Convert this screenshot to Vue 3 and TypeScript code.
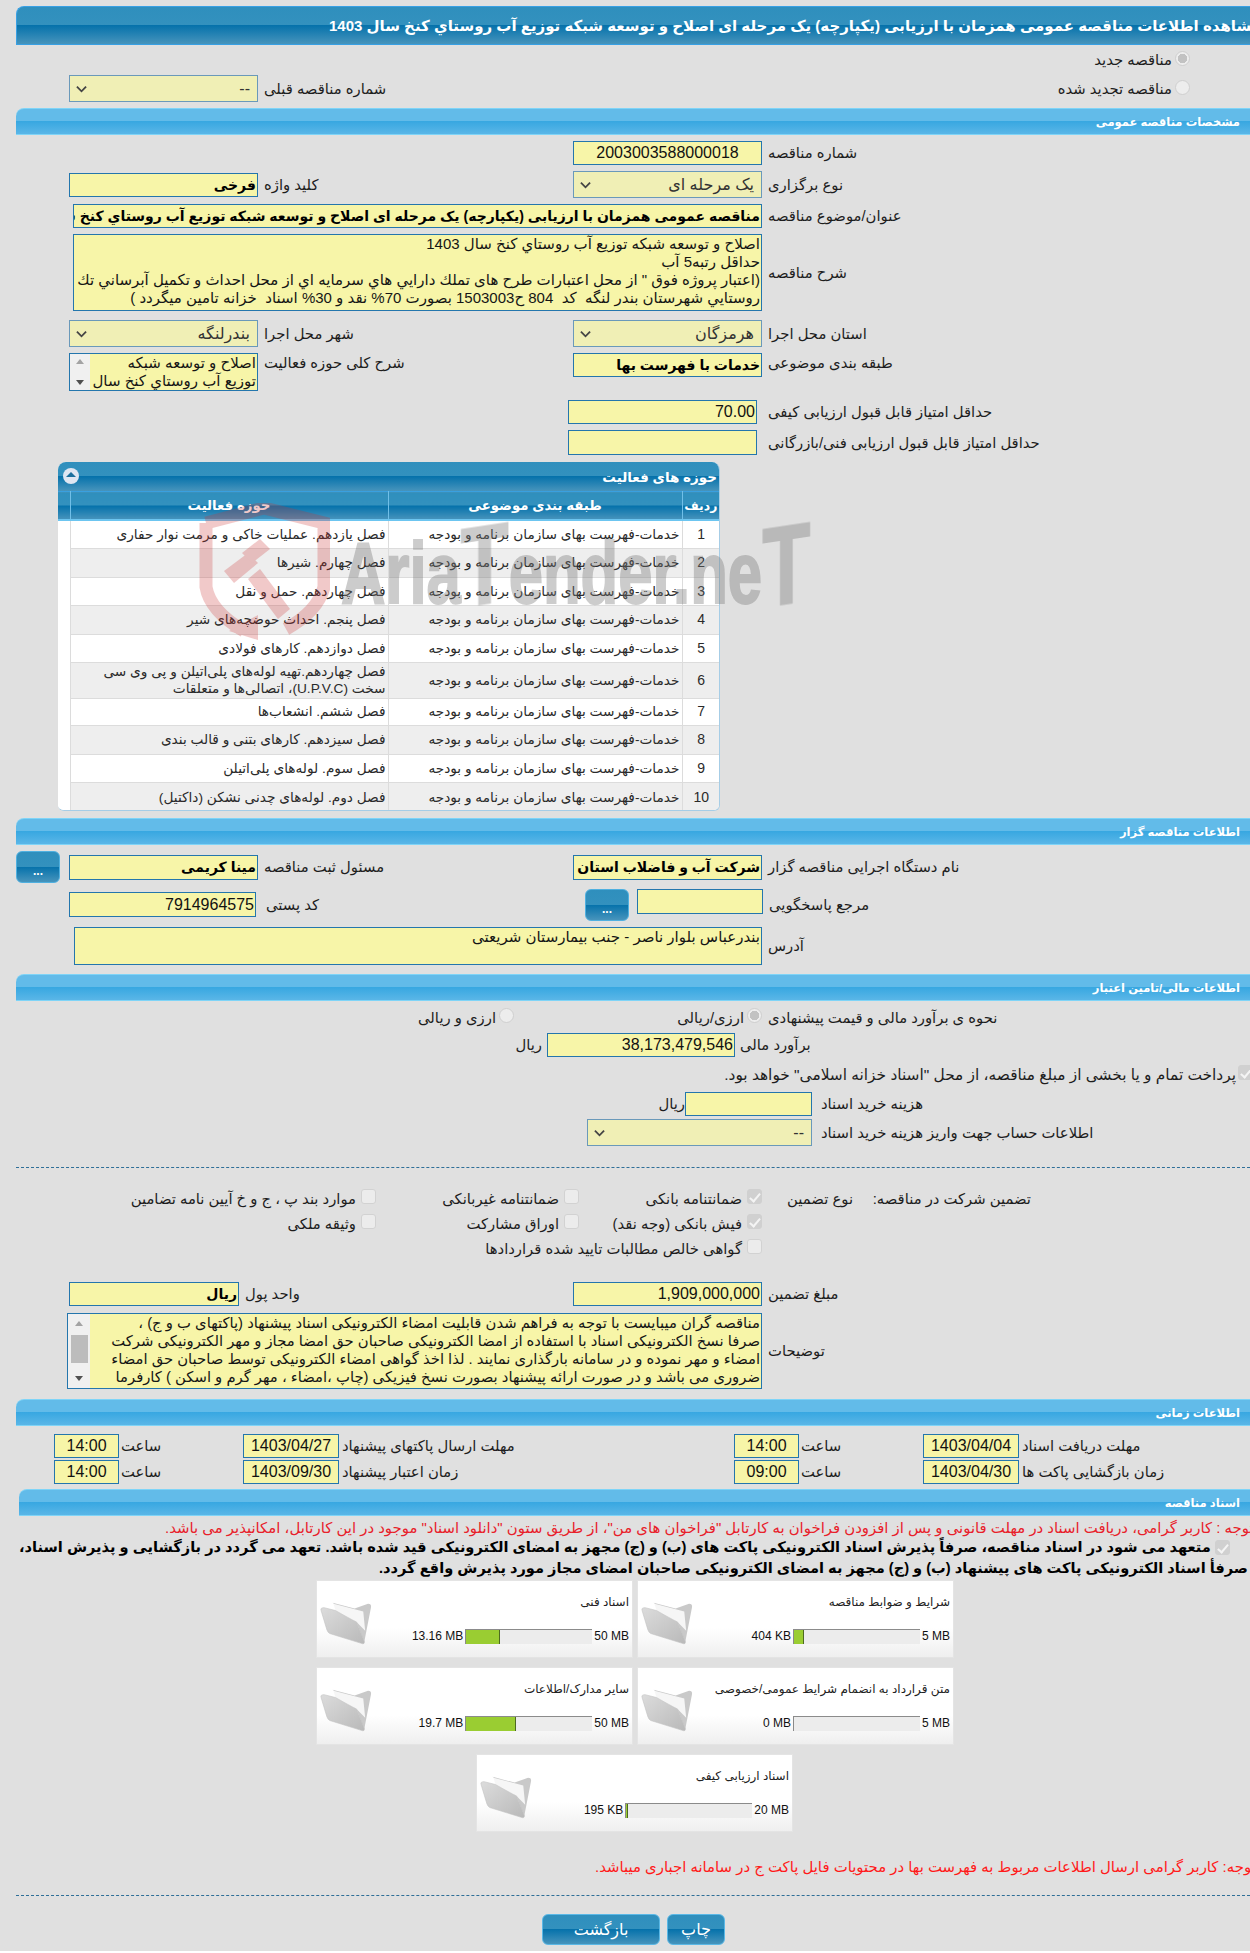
<script setup lang="ts">
interface Row { id: number; activity: string; h: number }
const rows: Row[] = [
  { id: 1, activity: 'فصل یازدهم. عملیات خاکی و مرمت نوار حفاری', h: 28 },
  { id: 2, activity: 'فصل چهارم. شیرها', h: 29 },
  { id: 3, activity: 'فصل چهاردهم. حمل و نقل', h: 28 },
  { id: 4, activity: 'فصل پنجم. احداث حوضچه‌های شیر', h: 29 },
  { id: 5, activity: 'فصل دوازدهم. کارهای فولادی', h: 28 },
  { id: 6, activity: 'فصل چهاردهم.تهیه لوله‌های پلی‌اتیلن و پی وی سی سخت (U.P.V.C)، اتصالی‌ها و متعلقات', h: 36 },
  { id: 7, activity: 'فصل ششم. انشعاب‌ها', h: 27 },
  { id: 8, activity: 'فصل سیزدهم. کارهای بتنی و قالب بندی', h: 29 },
  { id: 9, activity: 'فصل سوم. لوله‌های پلی‌اتیلن', h: 28 },
  { id: 10, activity: 'فصل دوم. لوله‌های چدنی نشکن (داکتیل)', h: 30 },
]
const classification = 'خدمات-فهرست بهای سازمان برنامه و بودجه'
interface Doc { title: string; used: string; max: string; fill: number }
const docRow1: Doc[] = [
  { title: 'اسناد فنی', used: '13.16 MB', max: '50 MB', fill: 35 },
  { title: 'شرایط و ضوابط مناقصه', used: '404 KB', max: '5 MB', fill: 11 },
]
const docRow2: Doc[] = [
  { title: 'سایر مدارک/اطلاعات', used: '19.7 MB', max: '50 MB', fill: 51 },
  { title: 'متن قرارداد به انضمام شرایط عمومی/خصوصی', used: '0 MB', max: '5 MB', fill: 0 },
]
const docRow3: Doc[] = [
  { title: 'اسناد ارزیابی کیفی', used: '195 KB', max: '20 MB', fill: 3 },
]
const docGroups = [
  { cls: 'docs', items: docRow1 },
  { cls: 'docs', items: docRow2 },
  { cls: 'docs docs-c', items: docRow3 },
]
const descLines = [
  'اصلاح و توسعه شبکه توزیع آب روستاي کنخ سال 1403',
  'حداقل رتبه5 آب',
  '(اعتبار پروژه فوق " از محل اعتبارات طرح های تملك دارايي هاي سرمايه اي از محل احداث و تکمیل آبرساني تك',
  'روستايي شهرستان بندر لنگه  کد  804 ح1503003 بصورت 70% نقد و 30% اسناد  خزانه تامین میگردد )',
]
const scopeLines = ['اصلاح و توسعه شبکه', 'توزیع آب روستاي کنخ سال']
const noteLines = [
  'مناقصه گران میبایست با توجه به فراهم شدن قابلیت امضاء الکترونیکی اسناد پیشنهاد (پاکتهای ب و ج) ،',
  'صرفا نسخ الکترونیکی اسناد با استفاده از امضا الکترونیکی صاحبان حق امضا مجاز و مهر الکترونیکی شرکت',
  'امضاء و مهر نموده و در سامانه بارگذاری نمایند . لذا اخذ گواهی امضاء الکترونیکی توسط صاحبان حق امضاء',
  'ضروری می باشد و در صورت ارائه پیشنهاد بصورت نسخ فیزیکی (چاپ ،امضاء ، مهر گرم و اسکن ) کارفرما',
]
</script>

<template>
  <div class="page">
    <div class="bar bar-dark"><span class="main-title">مشاهده اطلاعات مناقصه عمومی همزمان با ارزیابی (یکپارچه) یک مرحله ای اصلاح و توسعه شبکه توزیع آب روستاي کنخ سال 1403</span></div>

    <div class="radio-top"><span class="lab">مناقصه جدید</span><i class="radio on"></i></div>
    <div class="row m9 h27">
      <div class="left">
        <div class="select w189"><svg class="chev" viewBox="0 0 12 8"><path d="M1 1.5 6 6.5 11 1.5" /></svg><span>--</span></div>
        <span class="lab">شماره مناقصه قبلی</span>
      </div>
      <div class="radio-right"><i class="radio"></i><span class="lab">مناقصه تجدید شده</span></div>
    </div>

    <div class="bar bar-light m6"><span>مشخصات مناقصه عمومی</span></div>

    <div class="row m6 h24">
      <div class="left"></div>
      <div class="input w189 center num">2003003588000018</div>
      <span class="lab">شماره مناقصه</span>
    </div>
    <div class="row m6 h27">
      <div class="left">
        <div class="input w189 bold">فرخی</div>
        <span class="lab">کلید واژه</span>
      </div>
      <div class="select w189"><svg class="chev" viewBox="0 0 12 8"><path d="M1 1.5 6 6.5 11 1.5" /></svg><span>یک مرحله ای</span></div>
      <span class="lab">نوع برگزاری</span>
    </div>
    <div class="row row-wide m6 h24">
      <div class="input w689 bold">مناقصه عمومی همزمان با ارزیابی (یکپارچه) یک مرحله ای اصلاح و توسعه شبکه توزیع آب روستاي کنخ سال 1403</div>
      <span class="lab">عنوان/موضوع مناقصه</span>
    </div>
    <div class="row row-wide m6 h77">
      <div class="area w689">
        <div class="area-text"><div v-for="l in descLines" :key="l" class="pre">{{ l }}</div></div>
      </div>
      <span class="lab">شرح مناقصه</span>
    </div>
    <div class="row m9 h27">
      <div class="left">
        <div class="select w189"><svg class="chev" viewBox="0 0 12 8"><path d="M1 1.5 6 6.5 11 1.5" /></svg><span>بندرلنگه</span></div>
        <span class="lab">شهر محل اجرا</span>
      </div>
      <div class="select w189"><svg class="chev" viewBox="0 0 12 8"><path d="M1 1.5 6 6.5 11 1.5" /></svg><span>هرمزگان</span></div>
      <span class="lab">استان محل اجرا</span>
    </div>
    <div class="row row-ta m6 h38 top">
      <div class="left top">
        <div class="area w189 h38">
          <div class="scroll scroll-sm"><i class="up"></i><i class="down"></i></div>
          <div class="area-text"><div v-for="l in scopeLines" :key="l" class="pre">{{ l }}</div></div>
        </div>
        <span class="lab">شرح کلی حوزه فعالیت</span>
      </div>
      <div class="input w189 h24 bold">خدمات با فهرست بها</div>
      <span class="lab">طبقه بندی موضوعی</span>
    </div>
    <div class="row row-score m9 h24">
      <div class="input w189 num right">70.00</div>
      <span class="lab">حداقل امتیاز قابل قبول ارزیابی کیفی</span>
    </div>
    <div class="row row-score m6 h25">
      <div class="input w189 h25"></div>
      <span class="lab">حداقل امتیاز قابل قبول ارزیابی فنی/بازرگانی</span>
    </div>

    <div class="panel">
      <div class="panel-head">
        <i class="toggle"></i>
        <span>حوزه های فعالیت</span>
      </div>
      <table class="grid">
        <colgroup><col class="c1" /><col class="c2" /><col class="c3" /><col class="c4" /></colgroup>
        <thead>
          <tr>
            <th>ردیف</th>
            <th>طبقه بندی موضوعی</th>
            <th>حوزه فعالیت</th>
            <th></th>
          </tr>
        </thead>
        <tbody>
          <tr v-for="r in rows" :key="r.id" :class="{ alt: r.id % 2 === 0 }" :style="{ height: r.h + 'px' }">
            <td class="num-cell">{{ r.id }}</td>
            <td>{{ classification }}</td>
            <td>{{ r.activity }}</td>
            <td class="blank"></td>
          </tr>
        </tbody>
      </table>
    </div>

    <div class="bar bar-light m7"><span>اطلاعات مناقصه گزار</span></div>

    <div class="row row-btn m6 h32">
      <div class="left left-btn">
        <button class="btn-dots">...</button>
        <div class="input w189 h25 bold">مینا کریمی</div>
        <span class="lab">مسئول ثبت مناقصه</span>
      </div>
      <div class="input w189 h25 bold">شرکت آب و فاضلاب استان هرمزگان</div>
      <span class="lab">نام دستگاه اجرایی مناقصه گزار</span>
    </div>
    <div class="row row-resp m6 h32">
      <div class="left">
        <div class="input w187 h25 num right">7914964575</div>
        <span class="lab lab-zip">کد پستی</span>
      </div>
      <div class="respond">
        <button class="btn-dots">...</button>
        <div class="input w126 h25"></div>
      </div>
      <span class="lab lab-resp">مرجع پاسخگویی</span>
    </div>
    <div class="row row-addr m6 h38">
      <div class="area w688 h38">
        <div class="area-text">بندرعباس بلوار ناصر - جنب بیمارستان شریعتی</div>
      </div>
      <span class="lab">آدرس</span>
    </div>

    <div class="bar bar-light m9"><span>اطلاعات مالی/تامین اعتبار</span></div>

    <div class="fin-radios">
      <span class="opt"><i class="radio"></i><span class="lab">ارزی و ریالی</span></span>
      <span class="opt"><i class="radio on"></i><span class="lab">ارزی/ریالی</span></span>
      <span class="lab fin-lab">نحوه ی برآورد مالی و قیمت پیشنهادی</span>
    </div>
    <div class="row row-budget m5 h24">
      <span class="lab budget-unit">ریال</span>
      <div class="input w188 num right">38,173,479,546</div>
      <span class="lab">برآورد مالی</span>
    </div>
    <div class="treasury">
      <span class="lab">پرداخت تمام و یا بخشی از مبلغ مناقصه، از محل "اسناد خزانه اسلامی" خواهد بود.</span>
      <i class="check on"></i>
    </div>
    <div class="row row-cost m7 h24">
      <span class="lab">ریال</span>
      <div class="input w127"></div>
      <span class="lab">هزینه خرید اسناد</span>
    </div>
    <div class="row row-acc m3 h27">
      <div class="select w225"><svg class="chev" viewBox="0 0 12 8"><path d="M1 1.5 6 6.5 11 1.5" /></svg><span>--</span></div>
      <span class="lab">اطلاعات حساب جهت واریز هزینه خرید اسناد</span>
    </div>

    <div class="dashed dashed-1"></div>

    <div class="guar">
      <div class="g"><i class="check"></i><span class="lab">موارد بند پ ، ج و خ آیین نامه تضامین</span></div>
      <div class="g"><i class="check"></i><span class="lab">ضمانتنامه غیربانکی</span></div>
      <div class="g"><i class="check on"></i><span class="lab">ضمانتنامه بانکی</span></div>
      <div class="g"><span class="lab">نوع تضمین</span></div>
      <div class="g"><span class="lab">تضمین شرکت در مناقصه:</span></div>
      <div class="g"><i class="check"></i><span class="lab">وثیقه ملکی</span></div>
      <div class="g"><i class="check"></i><span class="lab">اوراق مشارکت</span></div>
      <div class="g"><i class="check on"></i><span class="lab">فیش بانکی (وجه نقد)</span></div>
      <div class="g"></div>
      <div class="g"></div>
      <div class="g"></div>
      <div class="g"></div>
      <div class="g"><i class="check"></i><span class="lab">گواهی خالص مطالبات تایید شده قراردادها</span></div>
    </div>

    <div class="row m21 h24">
      <div class="left">
        <div class="input w170 bold">ریال</div>
        <span class="lab">واحد پول</span>
      </div>
      <div class="input w189 num right">1,909,000,000</div>
      <span class="lab">مبلغ تضمین</span>
    </div>
    <div class="row row-note m7 h76">
      <div class="area area-note w695">
        <div class="scroll"><i class="up"></i><b class="thumb"></b><i class="down"></i></div>
        <div class="area-text"><div v-for="l in noteLines" :key="l" class="pre">{{ l }}</div></div>
      </div>
      <span class="lab">توضیحات</span>
    </div>

    <div class="bar bar-light m10"><span>اطلاعات زمانی</span></div>

    <div class="times m8">
      <div class="time-half">
        <div class="input t-time num center">14:00</div><span class="lab t-sa">ساعت</span>
        <div class="input t-date num center">1403/04/27</div><span class="lab">مهلت ارسال پاکتهای پیشنهاد</span>
      </div>
      <div class="time-half">
        <div class="input t-time num center">14:00</div><span class="lab t-sa">ساعت</span>
        <div class="input t-date num center">1403/04/04</div><span class="lab">مهلت دریافت اسناد</span>
      </div>
    </div>
    <div class="times m2">
      <div class="time-half">
        <div class="input t-time num center">14:00</div><span class="lab t-sa">ساعت</span>
        <div class="input t-date num center">1403/09/30</div><span class="lab">زمان اعتبار پیشنهاد</span>
      </div>
      <div class="time-half">
        <div class="input t-time num center">09:00</div><span class="lab t-sa">ساعت</span>
        <div class="input t-date num center">1403/04/30</div><span class="lab">زمان بازگشایی پاکت ها</span>
      </div>
    </div>

    <div class="bar bar-light bar-docs m5"><span>اسناد مناقصه</span></div>

    <div class="notice n1">توجه : کاربر گرامی، دریافت اسناد در مهلت قانونی و پس از افزودن فراخوان به کارتابل "فراخوان های من"، از طریق ستون "دانلود اسناد" موجود در این کارتابل، امکانپذیر می باشد.</div>
    <div class="pledge p1">
      <span>متعهد می شود در اسناد مناقصه، صرفاً پذیرش اسناد الکترونیکی پاکت های (ب) و (ج) مجهز به امضای الکترونیکی قید شده باشد. تعهد می گردد در بازگشایی و پذیرش اسناد،</span>
      <i class="check on"></i>
    </div>
    <div class="pledge p2"><span>صرفأ اسناد الکترونیکی پاکت های پیشنهاد (ب) و (ج) مجهز به امضای الکترونیکی صاحبان امضای مجاز مورد پذیرش واقع گردد.</span></div>

    <div v-for="(g, gi) in docGroups" :key="gi" :class="g.cls">
      <div v-for="d in g.items" :key="d.title" class="card">
        <svg class="folder" viewBox="0 0 54 48">
          <defs>
            <linearGradient id="fg" x1="0" y1="0" x2="1" y2="1">
              <stop offset="0" stop-color="#dcdcdc" />
              <stop offset="1" stop-color="#b9b9b9" />
            </linearGradient>
          </defs>
          <path d="M13 4 36 10 50 5Q54 5 53 9L46 45 38 24Z" fill="#c9c9c9" />
          <path d="M14 5 45 13 47 33 38 24 16 12Z" fill="#f6f6f6" />
          <path d="M1 12Q0 9 4 9L16 12Q30 20 38 24L46 44Q47 48 42 46L10 36Q8 35 7 32Z" fill="url(#fg)" stroke="#c2c2c2" stroke-width=".6" />
        </svg>
        <div class="card-body">
          <div class="card-title">{{ d.title }}</div>
          <div class="meter">
            <span class="mtext">{{ d.used }}</span>
            <div class="track"><div class="fill" :class="{ empty: d.fill === 0 }" :style="{ width: d.fill + 'px' }"></div></div>
            <span class="mtext">{{ d.max }}</span>
          </div>
        </div>
      </div>
    </div>

    <div class="notice n2">توجه: کاربر گرامی ارسال اطلاعات مربوط به فهرست بها در محتویات فایل پاکت ج در سامانه اجباری میباشد.</div>
    <div class="dashed dashed-2"></div>
    <div class="actions">
      <button class="action act-back">بازگشت</button>
      <button class="action act-print">چاپ</button>
    </div>

    <div class="watermark" aria-hidden="true">
      <svg class="shield" viewBox="0 0 132 145">
        <g fill="none" stroke="#c33" stroke-width="13">
          <path d="M8 20 66 5 126 20V84Q120 108 88 126" />
          <path d="M8 20V84Q12 108 46 128" />
        </g>
        <g fill="#c33">
          <path d="M31 128 60 137V112Z" />
          <path d="M26 68 50 50 60 60 36 80Z" />
          <path d="M44 50 62 36 72 46 54 60Z" />
          <path d="M50 76 62 66 92 106 80 116Z" />
        </g>
      </svg>
      <div class="wm-text"><span>Aria</span><span class="wm-t">T</span><span>ender.ne</span><span class="wm-t">T</span></div>
    </div>
  </div>
</template>

<style scoped>
.page {
  position: relative;
  box-sizing: border-box;
  height: 1951px;
  padding-top: 6px;
  background: #e0e0e0;
  overflow: hidden;
  font-family: "Liberation Sans", "DejaVu Sans", sans-serif;
  font-size: 12px;
  color: #1d1d1d;
}
.bar {
  box-sizing: border-box;
  margin-left: 16px;
  display: flex;
  align-items: center;
  color: #fff;
  font-weight: 700;
  white-space: nowrap;
}
.bar-dark {
  height: 39px;
  border-top-left-radius: 8px;
  border-left: 1px solid #38a0e4;
  border-top: 1px solid #38a0e4;
  border-bottom: 1px solid #38a0e4;
  background: linear-gradient(#2f8fbd 0, #3391be 49%, #0672ab 50%, #4794bc 100%);
}
.main-title {
  margin-left: 312px;
  direction: rtl;
  font-size: 15px;
  flex: none;
}
.bar-light {
  height: 27px;
  padding-right: 10px;
  direction: rtl;
  border-top-left-radius: 8px;
  border-top: 1px solid #7fd4f7;
  border-bottom: 1px solid #7fd4f7;
  background: linear-gradient(#62bbe9 0, #62bbe9 47%, #37a7e1 48%, #5ab6e7 100%);
  font-size: 11.5px;
}
.bar-docs { margin-left: 19px; }

.m2 { margin-top: 2px; }
.m3 { margin-top: 3px; }
.m5 { margin-top: 5px; }
.m6 { margin-top: 6px; }
.m7 { margin-top: 7px; }
.m8 { margin-top: 8px; }
.m9 { margin-top: 9px; }
.m10 { margin-top: 10px; }
.m21 { margin-top: 21px; }
.h24 { height: 24px; }
.h25 { height: 25px; }
.h27 { height: 27px; }
.h32 { height: 32px; }
.h38 { height: 38px; }
.h76 { height: 76px; }
.h77 { height: 77px; }

.row {
  display: flex;
  align-items: center;
  gap: 6px;
  padding-left: 69px;
}
.row.top, .left.top { align-items: flex-start; }
.left {
  width: 504px;
  flex: none;
  display: flex;
  align-items: center;
  gap: 6px;
  height: 100%;
}
.row > .left { margin-right: -6px; }
.row-wide { padding-left: 73px; }
.row-ta .lab { margin-top: 2px; }
.row-score { padding-left: 568px; gap: 11px; }
.row-btn { padding-left: 16px; }
.left-btn { width: 557px; }
.left-btn .btn-dots { margin-right: 3px; }
.row-resp { align-items: flex-start; }
.row-resp .left { align-items: flex-start; }
.row-resp .left .input { margin-top: 3px; }
.lab-zip { margin-left: 4px; margin-top: 8px; }
.lab-resp { margin-top: 8px; }
.row-addr { padding-left: 74px; }
.row-note { padding-left: 67px; }
.row-budget { padding-left: 518px; gap: 5px; }
.budget-unit { width: 24px; flex: none; }
.row-cost { padding-left: 662px; gap: 9px; }
.row-cost > .lab:first-child { width: 23px; flex: none; margin-right: -9px; }
.row-acc { padding-left: 587px; gap: 9px; }

.lab {
  direction: rtl;
  white-space: nowrap;
  font-size: 14.8px;
  line-height: 16px;
}

.input, .select {
  box-sizing: border-box;
  flex: none;
  height: 24px;
  direction: rtl;
  white-space: nowrap;
  overflow: hidden;
  display: flex;
  align-items: center;
}
.input {
  border: 1px solid #2476ad;
  background: #f7f5a8;
  color: #111;
  padding: 0 1px;
  font-size: 13px;
}
.select {
  position: relative;
  height: 27px;
  border: 1px solid #6a99ba;
  background: #f0efb5;
  color: #333;
  padding-right: 7px;
  font-size: 16px;
}
.chev {
  position: absolute;
  left: 6px;
  top: 9px;
  width: 11px;
  height: 8px;
  fill: none;
  stroke: #444;
  stroke-width: 2;
}
.input.h24 { height: 24px; }
.input.h25 { height: 25px; }
.w126 { width: 126px; }
.w127 { width: 127px; }
.w170 { width: 170px; }
.w187 { width: 187px; }
.w188 { width: 188px; }
.w189 { width: 189px; }
.w225 { width: 225px; }
.w688 { width: 688px; }
.w689 { width: 689px; }
.w695 { width: 695px; }
.bold { font-weight: 700; font-size: 14px; color: #000; }
.num { font-size: 16px; }
.center { justify-content: center; }
.right { justify-content: flex-start; }

.area {
  box-sizing: border-box;
  flex: none;
  height: 100%;
  border: 1px solid #2476ad;
  background: #f7f5a8;
  display: flex;
  overflow: hidden;
  font-size: 15px;
  line-height: 18px;
}
.area.h38 { height: 38px; }
.area-note { font-size: 14.8px; }
.area-text {
  flex: 1;
  min-width: 0;
  direction: rtl;
  padding: 0 1px;
  color: #151515;
  overflow: hidden;
}
.pre { white-space: pre; }
.scroll {
  flex: none;
  width: 22px;
  background: #f0f0f0;
  display: flex;
  flex-direction: column;
  align-items: center;
  justify-content: space-between;
  padding: 7px 0;
  box-sizing: border-box;
}
.scroll-sm { width: 20px; padding: 5px 0; }
.up, .down {
  width: 0;
  height: 0;
  border-left: 4px solid transparent;
  border-right: 4px solid transparent;
  display: block;
}
.up { border-bottom: 5px solid #a3a3a3; }
.down { border-top: 5px solid #505050; }
.thumb { width: 17px; height: 28px; background: #bcbcbc; display: block; margin-bottom: 5px; }

.radio-top {
  height: 15px;
  margin-top: 6px;
  display: flex;
  justify-content: flex-end;
  align-items: center;
  gap: 3px;
  padding-right: 60px;
}
.radio-top .lab { margin-top: 3px; }
.radio-right {
  flex: 1;
  direction: rtl;
  display: flex;
  align-items: center;
  gap: 3px;
  padding-right: 60px;
  margin-top: -3px;
}
.radio-right .lab { margin-top: 3px; }
.radio {
  box-sizing: border-box;
  flex: none;
  display: block;
  width: 15px;
  height: 15px;
  border-radius: 50%;
  background: #ededed;
  border: 1px solid #cfcfcf;
}
.radio.on { background: radial-gradient(circle, #c2c2c2 0 4.5px, #ededed 5px); }
.check {
  box-sizing: border-box;
  flex: none;
  display: block;
  width: 15px;
  height: 15px;
  border-radius: 3px;
  background: #ececec;
  border: 1px solid #d2d2d2;
  position: relative;
}
.check.on { background: #d0d0d0; border-color: #d0d0d0; }
.check.on::after {
  content: "";
  position: absolute;
  left: 4px;
  top: 1px;
  width: 4px;
  height: 9px;
  border: solid #f4f4f4;
  border-width: 0 2px 2px 0;
  transform: rotate(40deg);
}

.panel {
  box-sizing: border-box;
  width: 662px;
  height: 349px;
  margin: 7px 0 0 58px;
  border-radius: 8px 8px 6px 6px;
  overflow: hidden;
  background: #fff;
  border-right: 1px solid #a6cde6;
  border-bottom: 1px solid #a6cde6;
}
.panel-head {
  position: relative;
  height: 29px;
  direction: rtl;
  display: flex;
  align-items: center;
  padding-right: 2px;
  color: #fff;
  font-weight: 700;
  font-size: 13.5px;
  background: linear-gradient(#2f8fbd 0, #3391be 49%, #0672ab 50%, #4794bc 100%);
}
.toggle {
  position: absolute;
  left: 5px;
  top: 6px;
  width: 16px;
  height: 16px;
  border-radius: 50%;
  background: #dfe6f2;
}
.toggle::after {
  content: "";
  position: absolute;
  left: 3px;
  top: 4px;
  border-left: 5px solid transparent;
  border-right: 5px solid transparent;
  border-bottom: 5px solid #1c6f9e;
}
.grid {
  width: 661px;
  border-collapse: collapse;
  table-layout: fixed;
  direction: rtl;
  font-size: 13.7px;
}
.c1 { width: 37px; }
.c2 { width: 294px; }
.c3 { width: 318px; }
.c4 { width: 12px; }
.grid th {
  height: 27px;
  padding: 0;
  color: #fff;
  font-size: 13.3px;
  border-left: 1px solid #70bfe8;
  border-top: 1px solid #3aa0e0;
  border-bottom: 2px solid #6cc5f0;
  background: linear-gradient(#2f8fbd 0, #3391be 49%, #0672ab 50%, #4794bc 100%);
}
.grid th:first-child { font-size: 12.5px; }
.grid th:last-child { border-left: 0; }
.grid td {
  padding: 0 2px 0 3px;
  border-left: 1px solid #dcdcdc;
  border-bottom: 1px solid #dcdcdc;
  line-height: 17px;
  color: #2a2a2a;
}
.grid td.blank { border-left: 0; border-bottom: 0; background: #fff; }
.grid td.num-cell { text-align: center; font-size: 14px; }
.grid tr.alt td:not(.blank) { background: #eeeeee; }

.btn-dots {
  box-sizing: border-box;
  width: 44px;
  height: 32px;
  flex: none;
  padding: 8px 0 0;
  font: 700 12px "Liberation Sans", sans-serif;
  color: #fff;
  border: 1px solid #4fb0e0;
  border-radius: 6px;
  background: linear-gradient(#2f8fbd 0, #3391be 49%, #0672ab 50%, #4794bc 100%);
}
.respond {
  display: flex;
  align-items: flex-start;
  gap: 8px;
  margin-left: 12px;
}

.fin-radios {
  margin-top: 7px;
  height: 20px;
  display: grid;
  grid-template-columns: 514px 248px 1fr;
  align-items: center;
}
.fin-lab { margin-left: 6px; justify-self: start; }
.opt {
  display: flex;
  direction: rtl;
  align-items: center;
  gap: 3px;
  justify-self: end;
}
.opt .radio { margin-top: -5px; }

.treasury {
  margin-top: 8px;
  height: 20px;
  display: flex;
  justify-content: flex-end;
  align-items: center;
  gap: 2px;
  margin-right: -3px;
}
.treasury .check { margin-top: -6px; }
.treasury .lab { font-size: 15.4px; }

.dashed { margin-left: 16px; border-top: 1px dashed #2f6f98; height: 0; }
.dashed-1 { margin-top: 21px; }
.dashed-2 { margin-top: 19px; }

.guar {
  margin-top: 18px;
  display: grid;
  grid-template-columns: 376px 203px 183px 91px 178px;
  grid-auto-rows: 25px;
}
.g {
  direction: rtl;
  display: flex;
  align-items: center;
  gap: 5px;
}
.g .check { margin-top: -5px; }

.times {
  display: flex;
  height: 24px;
}
.time-half {
  display: flex;
  align-items: center;
  flex: none;
}
.time-half:first-child { width: 734px; padding-left: 54px; box-sizing: border-box; }
.t-time { width: 65px; }
.t-date { width: 96px; }
.t-sa {
  width: 124px;
  box-sizing: border-box;
  padding-left: 2px;
  flex: none;
  text-align: left;
}
.t-date + .lab { margin-left: 3px; }

.notice {
  white-space: nowrap;
  direction: rtl;
  color: #e8202a;
  font-size: 14.9px;
  line-height: 18px;
  width: max-content;
}
.n1 { margin-top: 3px; margin-left: 165px; }
.n2 { margin-top: 26px; margin-left: 595px; color: #ff1a1a; }
.pledge {
  display: flex;
  width: max-content;
  align-items: center;
  gap: 4px;
  white-space: nowrap;
  font-size: 14.6px;
  font-weight: 700;
  color: #000;
  line-height: 21px;
}
.pledge span { direction: rtl; }
.p1 { margin-left: 19px; }
.p2 { margin-left: 379px; margin-bottom: 1px; }

.docs {
  display: flex;
  gap: 4px;
  padding-left: 316px;
  margin-bottom: 9px;
}
.docs-c { padding-left: 476px; margin-bottom: 0; }
.card {
  box-sizing: border-box;
  width: 317px;
  height: 78px;
  display: flex;
  border: 1px solid #e4e4e4;
  background: linear-gradient(#fff 0, #fff 62%, #efefef 100%);
}
.folder {
  flex: none;
  width: 52px;
  height: 46px;
  margin: 18px 0 0 3px;
}
.card-body {
  flex: 1;
  min-width: 0;
  padding: 12px 3px 0 0;
}
.card-title {
  direction: rtl;
  font-size: 12px;
  line-height: 18px;
  white-space: nowrap;
  color: #222;
}
.meter {
  margin-top: 18px;
  display: flex;
  justify-content: flex-end;
  align-items: center;
  gap: 2px;
}
.mtext { font-size: 12px; white-space: nowrap; color: #111; line-height: 15px; }
.track {
  box-sizing: border-box;
  width: 127px;
  height: 15px;
  border-top: 1px solid #8b8b8b;
  background: #ececec;
}
.fill {
  box-sizing: border-box;
  height: 14px;
  background: #9acd32;
  border-right: 1px solid #4d6a20;
  border-left: 1px solid #8a8a8a;
}
.fill.empty { width: 1px !important; border-right: 0; }

.actions {
  margin-top: 18px;
  display: flex;
  gap: 7px;
  padding-left: 542px;
}
.action {
  box-sizing: border-box;
  height: 31px;
  direction: rtl;
  border: 1px solid #5ab8e6;
  border-radius: 6px;
  color: #fff;
  font: 16px "Liberation Sans", "DejaVu Sans", sans-serif;
  background: linear-gradient(#2f8fbd 0, #3391be 49%, #0672ab 50%, #4794bc 100%);
}
.act-back { width: 118px; }
.act-print { width: 58px; }

.watermark {
  position: absolute;
  left: 198px;
  top: 500px;
  width: 620px;
  height: 150px;
  pointer-events: none;
}
.shield {
  position: absolute;
  left: 0;
  top: 3px;
  width: 132px;
  height: 145px;
  opacity: .26;
}
.wm-text {
  position: absolute;
  left: 143px;
  bottom: 39px;
  display: flex;
  align-items: baseline;
  font: 700 88px "Liberation Sans", sans-serif;
  line-height: 76px;
  color: #787878;
  opacity: .38;
  -webkit-text-stroke: 2px #787878;
  white-space: nowrap;
  transform: scaleX(.7);
  transform-origin: left bottom;
}
.wm-t { font-size: 112px; line-height: 76px; display: inline-block; transform: skewY(-6deg); }
</style>

<style>
html, body { margin: 0; background: #fff; }
</style>
